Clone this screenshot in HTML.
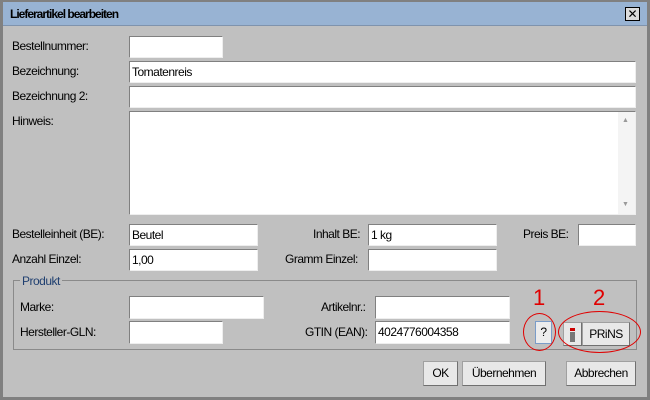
<!DOCTYPE html>
<html><head><style>
*{box-sizing:border-box;margin:0;padding:0}
body{width:650px;height:400px;background:#c0c0c0;font-family:"Liberation Sans",Arial,sans-serif;font-size:12px;color:#000;position:relative;overflow:hidden;letter-spacing:-0.5px}
.frame{position:absolute;left:0;top:0;width:650px;height:400px;border:3px solid #808080;border-top:2px solid #808080}
.title{position:absolute;left:3px;top:2px;width:644px;height:24px;background:#98b3d3;border-bottom:1px solid #7f93ad}
.title span{position:absolute;left:7px;top:5px;font-weight:bold;font-size:12px;letter-spacing:-1px}
.x{position:absolute;left:625px;top:7px;width:15px;height:14px;border:1px solid #000;background:#dcdcdc;font-size:12px;line-height:12px;text-align:center;letter-spacing:0}
.l{position:absolute;font-size:12px}
.f{position:absolute;background:#fff;border-top:1px solid #808080;border-left:1px solid #808080;border-right:1px solid #eee;border-bottom:1px solid #eee;padding:2px 2px;font-size:12px;line-height:16px}
.grp{position:absolute;left:13px;top:280px;width:624px;height:70px;border:1px solid #8a8a8a}
.grp .t{position:absolute;left:6px;top:-7px;background:#c0c0c0;padding:0 2px;color:#1f3f70;font-size:12px;line-height:14px}
.b{position:absolute;background:#e8e8e8;border:1px solid #a0a0a0;border-right-color:#707070;border-bottom-color:#707070;text-align:center;font-size:12px}
.num{position:absolute;color:#e00000;font-size:22px;letter-spacing:0}
.ell{position:absolute;border:1.5px solid #e00000;border-radius:50%}
</style></head><body>
<div class="frame"></div>
<div class="title"><span>Lieferartikel bearbeiten</span></div>
<div class="x">✕</div>

<div class="l" style="left:12px;top:39px">Bestellnummer:</div>
<div class="f" style="left:129px;top:36px;width:94px;height:22px"></div>
<div class="l" style="left:12px;top:64px">Bezeichnung:</div>
<div class="f" style="left:129px;top:61px;width:507px;height:22px">Tomatenreis</div>
<div class="l" style="left:12px;top:89px">Bezeichnung 2:</div>
<div class="f" style="left:129px;top:86px;width:507px;height:22px"></div>
<div class="l" style="left:12px;top:114px">Hinweis:</div>
<div class="f" style="left:129px;top:111px;width:507px;height:104px"></div>
<div style="position:absolute;left:618px;top:112px;width:17px;height:102px;background:#f4f4f4"></div>
<div style="position:absolute;left:622px;top:117px;font-size:7px;color:#999">▲</div>
<div style="position:absolute;left:622px;top:201px;font-size:7px;color:#999">▼</div>

<div class="l" style="left:12px;top:227px">Bestelleinheit (BE):</div>
<div class="f" style="left:129px;top:224px;width:129px;height:22px">Beutel</div>
<div class="l" style="left:313px;top:227px">Inhalt BE:</div>
<div class="f" style="left:368px;top:224px;width:129px;height:22px">1 kg</div>
<div class="l" style="left:523px;top:227px">Preis BE:</div>
<div class="f" style="left:578px;top:224px;width:58px;height:22px"></div>
<div class="l" style="left:12px;top:252px">Anzahl Einzel:</div>
<div class="f" style="left:129px;top:249px;width:129px;height:22px">1,00</div>
<div class="l" style="left:285px;top:252px">Gramm Einzel:</div>
<div class="f" style="left:368px;top:249px;width:129px;height:22px"></div>

<div class="grp"><div class="t">Produkt</div></div>
<div class="l" style="left:20px;top:300px">Marke:</div>
<div class="f" style="left:129px;top:296px;width:135px;height:23px"></div>
<div class="l" style="left:20px;top:325px">Hersteller-GLN:</div>
<div class="f" style="left:129px;top:321px;width:94px;height:23px"></div>
<div class="l" style="left:321px;top:300px">Artikelnr.:</div>
<div class="f" style="left:375px;top:296px;width:135px;height:23px"></div>
<div class="l" style="left:305px;top:325px">GTIN (EAN):</div>
<div class="f" style="left:375px;top:321px;width:135px;height:23px">4024776004358</div>

<div class="b" style="left:535px;top:321px;width:17px;height:23px;line-height:20px;border:1px solid #7a9cc8;background:#ececec">?</div>
<div class="b" style="left:563px;top:322px;width:19px;height:24px"><div style="position:absolute;left:6px;top:5px;width:5px;height:3px;background:#c00"></div><div style="position:absolute;left:6px;top:9px;width:5px;height:10px;background:#777"></div></div>
<div class="b" style="left:582px;top:322px;width:48px;height:24px;line-height:22px">PRiNS</div>
<div class="num" style="left:533px;top:285px">1</div>
<div class="num" style="left:593px;top:285px">2</div>
<div class="ell" style="left:523px;top:313px;width:33px;height:38px"></div>
<div class="ell" style="left:558px;top:311px;width:83px;height:42px"></div>

<div class="b" style="left:423px;top:361px;width:35px;height:25px;line-height:23px">OK</div>
<div class="b" style="left:462px;top:361px;width:84px;height:25px;line-height:23px">Übernehmen</div>
<div class="b" style="left:566px;top:361px;width:70px;height:25px;line-height:23px">Abbrechen</div>
</body></html>
